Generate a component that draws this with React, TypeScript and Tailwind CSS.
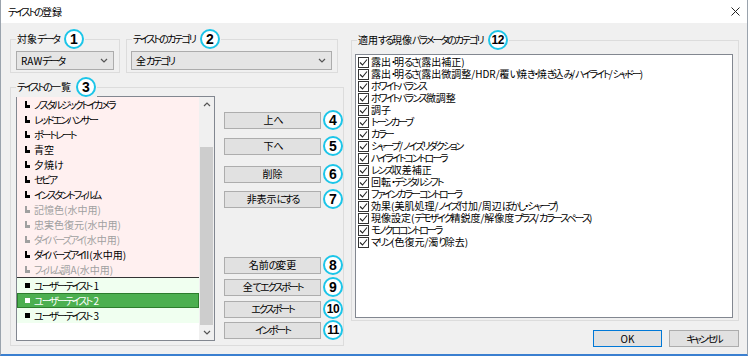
import React from "react";

const T = ({ s }: { s: string }) => (
  <>
    {s.split(/([\u3040-\u30ff]+)/).map((part, i) =>
      /^[\u3040-\u30ff]+$/.test(part) ? (
        <span key={i} className="tracking-[-2px]">
          {part}
        </span>
      ) : (
        <React.Fragment key={i}>{part}</React.Fragment>
      )
    )}
  </>
);

const Circle = ({ n }: { n: number }) => (
  <div className="relative z-10 flex h-[20px] w-[20px] shrink-0 items-center justify-center rounded-full border-[2.5px] border-[#1cc5e8] bg-white">
    {n >= 10 ? (
      <span className="font-['Liberation_Sans',Arial,sans-serif] text-[12px] font-bold leading-none tracking-[-0.5px] text-black">{n}</span>
    ) : (
      <span className="font-['Liberation_Sans',Arial,sans-serif] text-[14px] font-bold leading-none text-black">{n}</span>
    )}
  </div>
);

const Group = ({
  label,
  n,
  className,
  children,
}: {
  label: string;
  n: number;
  className: string;
  children?: React.ReactNode;
}) => (
  <div className={"relative border border-[#dcdcdc] " + className}>
    <div className="absolute left-[5px] top-[-1px] z-10 flex -translate-y-1/2 items-center gap-[5px] bg-[#f0f0f0] px-[1px]">
      <span className="whitespace-nowrap text-[10px] leading-none">
        <T s={label} />
      </span>
      <Circle n={n} />
    </div>
    {children}
  </div>
);

const Chevron = ({ up }: { up?: boolean }) => (
  <svg width="8" height="5" viewBox="0 0 8 5">
    <path d={up ? "M1 4 L4 1 L7 4" : "M1 1 L4 4 L7 1"} fill="none" stroke="#555" strokeWidth="1.2" />
  </svg>
);

const Select = ({ text, className }: { text: string; className: string }) => (
  <div className={"flex h-[19px] items-center justify-between border border-[#acacac] bg-[#e5e5e5] pl-[4px] pr-[5px] " + className}>
    <span className="leading-none">
      <T s={text} />
    </span>
    <Chevron />
  </div>
);

const Btn = ({ text, className }: { text: string; className?: string }) => (
  <div className={"flex h-[17px] w-[97px] items-center justify-center border border-[#adadad] bg-[#e1e1e1] leading-none " + (className ?? "")}>
    <span className="whitespace-nowrap">
      <T s={text} />
    </span>
  </div>
);

const presets: { t: string; g?: boolean }[] = [
  { t: "ノスタルジックトイカメラ" },
  { t: "レッドエンハンサー" },
  { t: "ポートレート" },
  { t: "青空" },
  { t: "夕焼け" },
  { t: "セピア" },
  { t: "インスタントフィルム" },
  { t: "記憶色(水中用)", g: true },
  { t: "忠実色復元(水中用)", g: true },
  { t: "ダイバーズアイ(水中用)", g: true },
  { t: "ダイバーズアイII(水中用)" },
  { t: "フィルム調A(水中用)", g: true },
];

const users = ["ユーザーテイスト 1", "ユーザーテイスト 2", "ユーザーテイスト 3"];

const cats = [
  "露出・明るさ(露出補正)",
  "露出・明るさ(露出微調整/HDR/覆い焼き・焼き込み/ハイライト/シャドー)",
  "ホワイトバランス",
  "ホワイトバランス微調整",
  "調子",
  "トーンカーブ",
  "カラー",
  "シャープ/ノイズリダクション",
  "ハイライトコントローラ",
  "レンズ収差補正",
  "回転・デジタルシフト",
  "ファインカラーコントローラ",
  "効果(美肌処理/ノイズ付加/周辺ぼかし・シャープ)",
  "現像設定(デモザイク精鋭度/解像度プラス/カラースペース)",
  "モノクロコントローラ",
  "マリン(色復元/濁り除去)",
];

const PresetIcon = ({ color }: { color: string }) => (
  <svg width="5" height="7" viewBox="0 0 5 7" className="shrink-0">
    <path d="M0 0h2v4h3v3H0z" fill={color} />
  </svg>
);

export default function App() {
  return (
    <div className="flex h-[356px] w-[748px] flex-col overflow-hidden border-x border-b-2 border-x-[#9aa3ad] border-b-[#3a7fd0] bg-[#f0f0f0] font-['Noto_Sans_CJK_JP',sans-serif] text-[10px] text-black [font-feature-settings:'palt']">
      {/* title bar */}
      <div className="flex h-[23px] shrink-0 items-center justify-between bg-white pl-[7px] pr-[7px]">
        <span className="text-[10px] leading-none">
          <T s="テイストの登録" />
        </span>
        <svg width="9" height="9" viewBox="0 0 9 9">
          <path d="M0.5 0.5 L8.5 8.5 M8.5 0.5 L0.5 8.5" stroke="#222" strokeWidth="1" />
        </svg>
      </div>

      <div className="flex flex-1">
        {/* left column */}
        <div className="ml-[9px] flex w-[334px] flex-col">
          <div className="mt-[16px] flex gap-[6px]">
            <Group label="対象データ" n={1} className="h-[34px] w-[110px] pl-[5px] pt-[11px]">
              <Select text="RAWデータ" className="w-[98px]" />
            </Group>
            <Group label="テイストのカテゴリ" n={2} className="h-[34px] w-[212px] pl-[4px] pt-[11px]">
              <Select text="全カテゴリ" className="w-[201px]" />
            </Group>
          </div>

          <Group label="テイストの一覧" n={3} className="mt-[14px] flex h-[259px] w-[334px] pl-[5px] pt-[8px]">
            {/* list box */}
            <div className="flex h-[245px] w-[209px] border border-[#828790] bg-white">
              <div className="flex flex-1 flex-col">
                {presets.map((p) => (
                  <div key={p.t} className="flex h-[15px] shrink-0 items-center gap-[4px] bg-[#fff0f0] pl-[8px]">
                    <PresetIcon color={p.g ? "#a0a0a0" : "#000"} />
                    <span className={p.g ? "whitespace-nowrap leading-none text-[#a0a0a0]" : "whitespace-nowrap leading-none"}>
                      <T s={p.t} />
                    </span>
                  </div>
                ))}
                <div className="h-[1px] shrink-0 bg-[#333]" />
                {users.map((u, i) =>
                  i === 1 ? (
                    <div key={u} className="flex h-[15px] shrink-0 items-center gap-[4px] border border-[#2d7d2d] bg-[#4caf50] pl-[7px] text-white">
                      <div className="h-[5px] w-[5px] bg-white" />
                      <span className="whitespace-nowrap leading-none">
                        <T s={u} />
                      </span>
                    </div>
                  ) : (
                    <div key={u} className="flex h-[15px] shrink-0 items-center gap-[4px] bg-[#f0fff0] pl-[8px]">
                      <div className="h-[5px] w-[5px] bg-black" />
                      <span className="whitespace-nowrap leading-none">
                        <T s={u} />
                      </span>
                    </div>
                  )
                )}
              </div>
              {/* scrollbar */}
              <div className="flex w-[15px] flex-col bg-[#f0f0f0]">
                <div className="flex h-[15px] items-center justify-center">
                  <Chevron up />
                </div>
                <div className="mt-[35px] h-[178px] px-[1px]">
                  <div className="h-full w-full bg-[#cdcdcd]" />
                </div>
                <div className="flex flex-1 items-center justify-center">
                  <Chevron />
                </div>
              </div>
            </div>

            {/* buttons */}
            <div className="ml-[9px] flex flex-col">
              <div className="mt-[14px] flex h-[20px] items-center gap-[2px]">
                <Btn text="上へ" />
                <Circle n={4} />
              </div>
              <div className="mt-[6px] flex h-[20px] items-center gap-[2px]">
                <Btn text="下へ" />
                <Circle n={5} />
              </div>
              <div className="mt-[8px] flex h-[20px] items-center gap-[2px]">
                <Btn text="削除" />
                <Circle n={6} />
              </div>
              <div className="mt-[5px] flex h-[20px] items-center gap-[2px]">
                <Btn text="非表示にする" />
                <Circle n={7} />
              </div>
              <div className="mt-[46px] flex h-[20px] items-center gap-[2px]">
                <Btn text="名前の変更" className="h-[16px]" />
                <Circle n={8} />
              </div>
              <div className="mt-[2px] flex h-[20px] items-center gap-[2px]">
                <Btn text="全てエクスポート" className="h-[16px]" />
                <Circle n={9} />
              </div>
              <div className="mt-[2px] flex h-[20px] items-center gap-[2px]">
                <Btn text="エクスポート" className="h-[16px]" />
                <Circle n={10} />
              </div>
              <div className="mt-[1px] flex h-[20px] items-center gap-[2px]">
                <Btn text="インポート" className="h-[16px]" />
                <Circle n={11} />
              </div>
            </div>
          </Group>
        </div>

        {/* right column */}
        <div className="ml-[7px] flex w-[388px] flex-col">
          <Group label="適用する現像パラメータのカテゴリ" n={12} className="mt-[17px] h-[281px] w-[388px] pl-[3px] pt-[13px]">
            <div className="flex h-[264px] w-[378px] flex-col border border-[#828790] bg-white pl-[2px] pt-[1px]">
              {cats.map((c) => (
                <div key={c} className="flex h-[12px] shrink-0 items-center gap-[2px]">
                  <div className="flex h-[11px] w-[11px] shrink-0 items-center justify-center border border-[#333] bg-white">
                    <svg width="9" height="9" viewBox="0 0 9 9">
                      <path d="M1 4.5 L3.5 7 L8 1.5" fill="none" stroke="#222" strokeWidth="1.1" />
                    </svg>
                  </div>
                  <span className="whitespace-nowrap leading-none">
                    <T s={c} />
                  </span>
                </div>
              ))}
            </div>
          </Group>
          <div className="mt-[9px] flex justify-end gap-[7px]">
            <div className="flex h-[17px] w-[69px] items-center justify-center border border-[#0078d7] bg-[#e1e1e1] leading-none">OK</div>
            <div className="flex h-[17px] w-[70px] items-center justify-center border border-[#adadad] bg-[#e1e1e1] leading-none">
              <T s="キャンセル" />
            </div>
          </div>
        </div>
      </div>
    </div>
  );
}
